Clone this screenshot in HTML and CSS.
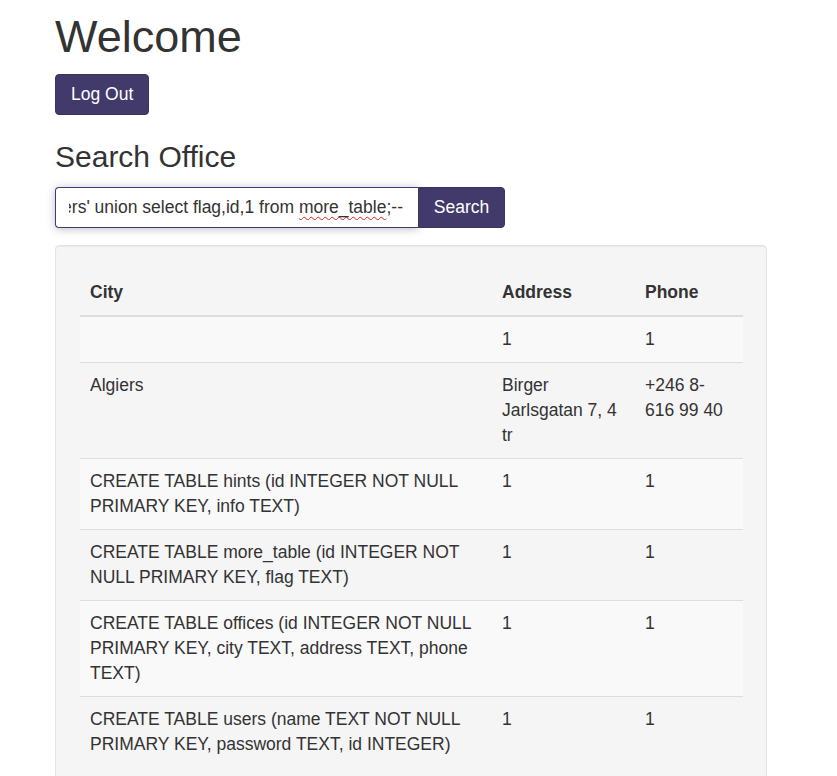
FILE: index.html
```html
<!DOCTYPE html>
<html>
<head>
<meta charset="utf-8">
<title>Welcome</title>
<link rel="stylesheet" href="styles.css">
</head>
<body>
<div class="container">
  <h1 class="title">Welcome</h1>
  <button class="btn">Log Out</button>
  <h2 class="subtitle">Search Office</h2>
  <div class="input-group">
    <div class="field"><div class="clip"><span class="value">users' union select flag,id,1 from <span class="spell">more_table</span>;--</span></div></div>
    <button class="btn btn-search">Search</button>
  </div>
  <div class="well">
    <table class="table">
      <thead>
        <tr><th class="c-city">City</th><th class="c-addr">Address</th><th class="c-phone">Phone</th></tr>
      </thead>
      <tbody>
        <tr><td></td><td>1</td><td>1</td></tr>
        <tr><td>Algiers</td><td>Birger Jarlsgatan 7, 4 tr</td><td>+246 8-616 99 40</td></tr>
        <tr><td>CREATE TABLE hints (id INTEGER NOT NULL PRIMARY KEY, info TEXT)</td><td>1</td><td>1</td></tr>
        <tr><td>CREATE TABLE more_table (id INTEGER NOT NULL PRIMARY KEY, flag TEXT)</td><td>1</td><td>1</td></tr>
        <tr><td>CREATE TABLE offices (id INTEGER NOT NULL PRIMARY KEY, city TEXT, address TEXT, phone TEXT)</td><td>1</td><td>1</td></tr>
        <tr><td>CREATE TABLE users (name TEXT NOT NULL PRIMARY KEY, password TEXT, id INTEGER)</td><td>1</td><td>1</td></tr>
      </tbody>
    </table>
  </div>
</div>
</body>
</html>
```
FILE: styles.css
```css
html, body {
  margin: 0;
  padding: 0;
  background: #fff;
}
body {
  font-family: "Liberation Sans", Arial, Helvetica, sans-serif;
  font-size: 17.5px;
  line-height: 25px;
  color: #333;
}
.container {
  width: 712px;
  padding-left: 55px;
}
.title {
  font-size: 45px;
  font-weight: 500;
  line-height: 1.1;
  margin: 12px 0 12px;
}
.btn {
  display: inline-block;
  font-family: inherit;
  font-size: 17.5px;
  line-height: 25px;
  color: #fff;
  background: #413a6b;
  border: 1px solid #3a3460;
  border-radius: 4px;
  padding: 7px 15px;
  margin: 0;
  cursor: pointer;
}
.subtitle {
  font-size: 30px;
  font-weight: 500;
  line-height: 33px;
  margin: 25px 0 14px;
}
.input-group {
  display: flex;
  height: 41px;
  margin-bottom: 17px;
}
.field {
  box-sizing: border-box;
  width: 363px;
  height: 41px;
  border: 1px solid #413a6b;
  border-right: 0;
  border-radius: 4px 0 0 4px;
  padding: 7px 15px 7px 13px;
  background: #fff;
  box-shadow: 0 1px 8px rgba(65, 58, 107, 0.35);
  color: #333;
}
.clip {
  display: flex;
  justify-content: flex-end;
  overflow: hidden;
  white-space: nowrap;
  height: 25px;
}
.value {
  flex: none;
}
.spell {
  text-decoration: underline wavy #e02020;
  text-decoration-thickness: 1px;
  text-underline-offset: 3px;
}
.btn-search {
  border-radius: 0 4px 4px 0;
  width: 87px;
  height: 41px;
  padding: 7px 0;
  text-align: center;
}
.well {
  box-sizing: border-box;
  width: 712px;
  background: #f5f5f5;
  border: 1px solid #e3e3e3;
  border-radius: 4px;
  padding: 24px;
  box-shadow: inset 0 1px 1px rgba(0, 0, 0, 0.05);
  min-height: 560px;
}
.table {
  width: 663px;
  border-collapse: collapse;
  border-spacing: 0;
}
.table th {
  text-align: left;
  font-weight: bold;
  padding: 10px;
  vertical-align: bottom;
  border-bottom: 2px solid #ddd;
}
.table td {
  padding: 10px;
  vertical-align: top;
  border-top: 1px solid #ddd;
}
.table tbody tr:nth-child(odd) {
  background: #f9f9f9;
}
.c-city { width: 392px; }
.c-addr { width: 123px; }
.c-phone { width: 88px; }
```
